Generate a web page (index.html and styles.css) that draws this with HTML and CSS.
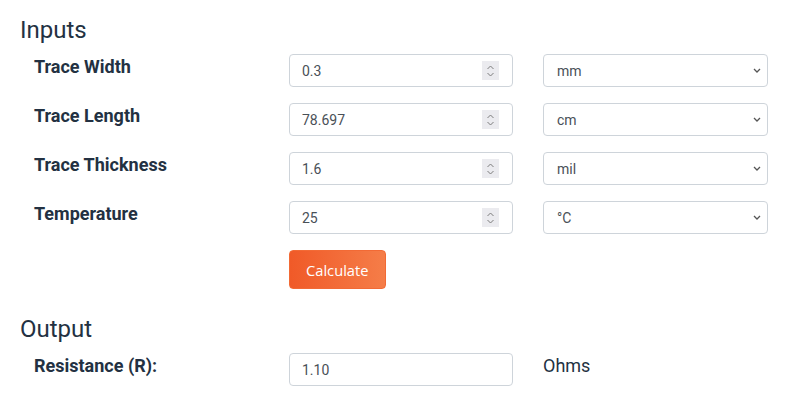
FILE: index.html
```html
<!DOCTYPE html>
<html>
<head>
<meta charset="utf-8">
<link rel="stylesheet" href="styles.css">
</head>
<body>
<div class="calc">
  <h2 class="heading">Inputs</h2>
  <div class="rows">
    <div class="row">
      <label class="label">Trace Width</label>
      <div class="num">
        <input class="field" type="number" value="0.3">
        <span class="spin"><svg width="9" height="14" viewBox="0 0 9 14"><path d="M1.5 5L4.5 2l3 3M1.5 9l3 3 3-3" fill="none" stroke="#7d7d7d" stroke-width="1"/></svg></span>
      </div>
      <select class="select"><option>mm</option></select>
    </div>
    <div class="row">
      <label class="label">Trace Length</label>
      <div class="num">
        <input class="field" type="number" value="78.697">
        <span class="spin"><svg width="9" height="14" viewBox="0 0 9 14"><path d="M1.5 5L4.5 2l3 3M1.5 9l3 3 3-3" fill="none" stroke="#7d7d7d" stroke-width="1"/></svg></span>
      </div>
      <select class="select"><option>cm</option></select>
    </div>
    <div class="row">
      <label class="label">Trace Thickness</label>
      <div class="num">
        <input class="field" type="number" value="1.6">
        <span class="spin"><svg width="9" height="14" viewBox="0 0 9 14"><path d="M1.5 5L4.5 2l3 3M1.5 9l3 3 3-3" fill="none" stroke="#7d7d7d" stroke-width="1"/></svg></span>
      </div>
      <select class="select"><option>mil</option></select>
    </div>
    <div class="row">
      <label class="label">Temperature</label>
      <div class="num">
        <input class="field" type="number" value="25">
        <span class="spin"><svg width="9" height="14" viewBox="0 0 9 14"><path d="M1.5 5L4.5 2l3 3M1.5 9l3 3 3-3" fill="none" stroke="#7d7d7d" stroke-width="1"/></svg></span>
      </div>
      <select class="select"><option>°C</option></select>
    </div>
    <div class="row">
      <span></span>
      <div><button class="btn">Calculate</button></div>
    </div>
  </div>
  <h2 class="heading heading-out">Output</h2>
  <div class="rows">
    <div class="row">
      <label class="label">Resistance (R):</label>
      <input class="field" type="text" value="1.10" readonly>
      <span class="unit">Ohms</span>
    </div>
  </div>
</div>
</body>
</html>
```
FILE: styles.css
```css
html, body {
  margin: 0;
  padding: 0;
  background: #ffffff;
}
body {
  font-family: Roboto, "Liberation Sans", Arial, sans-serif;
  color: #233142;
}
.calc {
  padding: 16px 20px 0 20px;
}
.heading {
  margin: 0 0 9px 0;
  font-size: 24px;
  font-weight: 400;
  line-height: 29px;
  color: #233142;
}
.heading-out {
  margin-top: 26px;
}
.rows {
  display: flex;
  flex-direction: column;
  gap: 16px;
  padding-left: 14px;
}
.row {
  display: grid;
  grid-template-columns: 225px 224px 225px;
  column-gap: 30px;
  align-items: start;
}
.label {
  font-size: 18px;
  font-weight: 700;
  line-height: 25px;
  color: #233142;
}
.num {
  position: relative;
}
.field, .select {
  box-sizing: border-box;
  width: 100%;
  height: 33px;
  margin: 0;
  border: 1px solid #ced4da;
  border-radius: 4px;
  background: #fff;
  font-family: Roboto, "Liberation Sans", Arial, sans-serif;
  font-size: 14px;
  color: #495057;
  outline: none;
}
.field {
  display: block;
  padding: 0 14px 0 12px;
  -moz-appearance: textfield;
}
.field::-webkit-inner-spin-button,
.field::-webkit-outer-spin-button {
  -webkit-appearance: none;
  margin: 0;
}
.spin {
  position: absolute;
  right: 14px;
  top: 7px;
  width: 17px;
  height: 19px;
  display: flex;
  align-items: center;
  justify-content: center;
  background: #ebebef;
}
.select {
  padding: 0 28px 0 13px;
  -webkit-appearance: none;
  appearance: none;
  background-image: url("data:image/svg+xml;utf8,<svg xmlns='http://www.w3.org/2000/svg' width='8' height='5' viewBox='0 0 8 5'><path d='M1 1l3 3 3-3' fill='none' stroke='%23555' stroke-width='1.3'/></svg>");
  background-repeat: no-repeat;
  background-position: right 6px center;
  background-size: 8px 5px;
}
.btn {
  box-sizing: border-box;
  height: 39px;
  padding: 0 16px;
  border: 1px solid #f26a35;
  border-radius: 4px;
  background: linear-gradient(90deg, #f05a28 0%, #f57d48 100%);
  color: #ffffff;
  font-family: "Open Sans", Roboto, sans-serif;
  font-size: 14.7px;
  cursor: pointer;
}
.unit {
  font-size: 18px;
  line-height: 25px;
  color: #233142;
}
```
